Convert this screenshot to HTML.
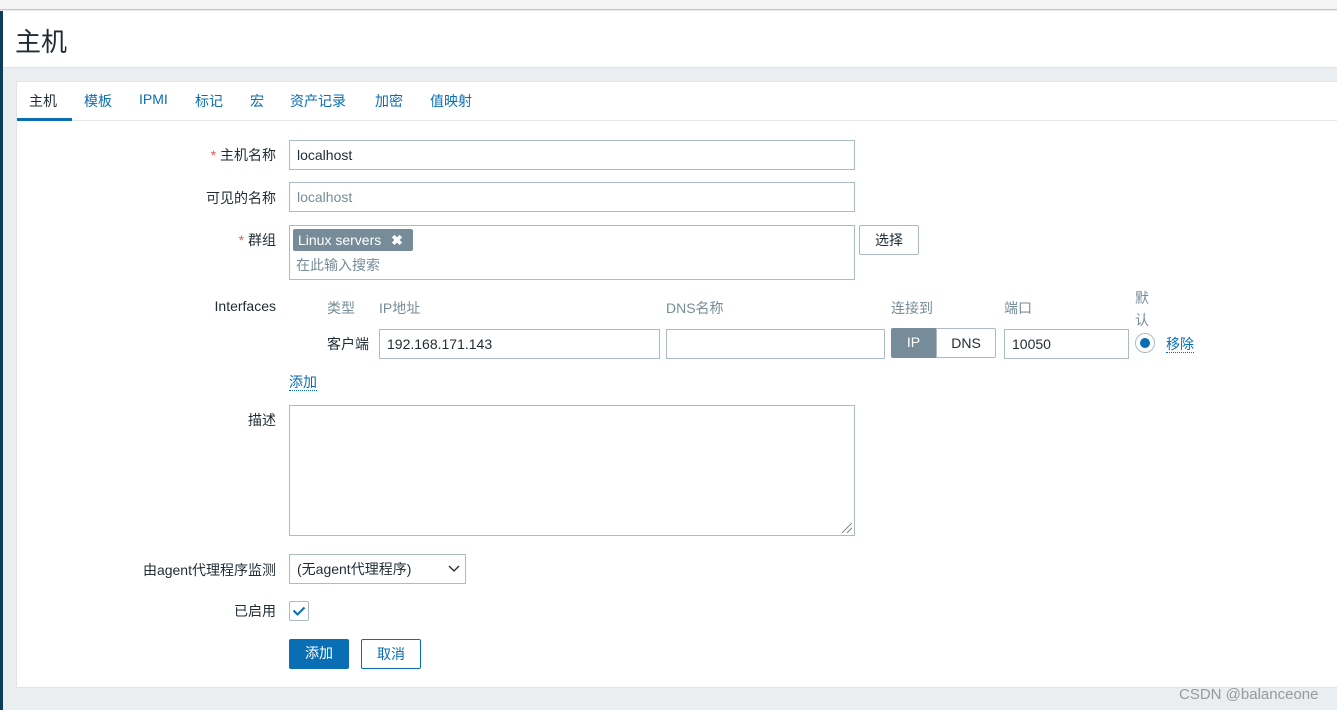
<!DOCTYPE html>
<html><head><meta charset="utf-8"><style>
*{box-sizing:border-box;margin:0;padding:0}
body{width:1337px;height:710px;overflow:hidden;background:#ebeef0;font-family:"Liberation Sans","Noto Sans CJK SC",sans-serif;font-size:14px;color:#1f2c33;position:relative}
.abs{position:absolute}
.top{left:0;top:0;width:1337px;height:10px;background:#f5f5f5;border-bottom:1px solid #c4c4c4}
.lbar{left:0;top:11px;width:3px;height:699px;background:#0e3c5c}
.hdr{left:3px;top:11px;width:1334px;height:57px;background:#fff;border-bottom:1px solid #dfe4e7}
.hdr h1{font-weight:normal;font-size:26px;position:absolute;left:12px;top:11px;color:#1f2c33}
.card{left:16px;top:81px;width:1321px;height:607px;background:#fff;border:1px solid #dfe4e7;border-right:none}
.tabs{left:17px;top:82px;width:1320px;height:39px;border-bottom:1px solid #e6e6e6}
.tab{position:absolute;top:9px;font-size:14px;color:#0a6eb4}
.lbl{position:absolute;text-align:right;right:1061px;font-size:14px;color:#1f2c33;white-space:nowrap}
.inp{position:absolute;border:1px solid #acbbc2;background:#fff;height:30px;padding:0 7px;line-height:28px;font-size:14px}
.gray{color:#768d99}
.req{color:#e45959}
.btn{position:absolute;height:30px;line-height:28px;text-align:center;font-size:14px;border-radius:2px}
.link{color:#0a6eb4;border-bottom:1px dotted #0a6eb4}
</style></head><body>
<div class="abs top"></div>
<div class="abs hdr"><h1>主机</h1></div>
<div class="abs lbar"></div>
<div class="abs card"></div>
<div class="abs tabs">
<span class="tab" style="left:12px;color:#1f2c33">主机</span>
<div class="abs" style="left:0;top:36px;width:55px;height:3px;background:#0a6eb4"></div>
<span class="tab" style="left:67px">模板</span>
<span class="tab" style="left:122px">IPMI</span>
<span class="tab" style="left:178px">标记</span>
<span class="tab" style="left:233px">宏</span>
<span class="tab" style="left:273px">资产记录</span>
<span class="tab" style="left:358px">加密</span>
<span class="tab" style="left:413px">值映射</span>
</div>

<div class="lbl" style="top:145px"><span class="req">* </span>主机名称</div>
<div class="inp" style="left:289px;top:140px;width:566px">localhost</div>
<div class="lbl" style="top:188px">可见的名称</div>
<div class="inp gray" style="left:289px;top:182px;width:566px">localhost</div>
<div class="lbl" style="top:230px"><span class="req">* </span>群组</div>
<div class="inp" style="left:289px;top:225px;width:566px;height:55px"></div>
<div class="abs" style="left:293px;top:229px;width:120px;height:22px;background:#768d99;color:#fff;border-radius:2px;padding:0 5px;line-height:22px">Linux servers <b style="margin-left:6px">✖</b></div>
<div class="abs gray" style="left:296px;top:255px">在此输入搜索</div>
<div class="btn" style="left:859px;top:225px;width:60px;border:1px solid #acbbc2;background:#fff">选择</div>

<div class="lbl" style="top:298px">Interfaces</div>
<div class="abs gray" style="left:327px;top:298px">类型</div>
<div class="abs gray" style="left:379px;top:298px">IP地址</div>
<div class="abs gray" style="left:666px;top:298px">DNS名称</div>
<div class="abs gray" style="left:891px;top:298px">连接到</div>
<div class="abs gray" style="left:1004px;top:298px">端口</div>
<div class="abs gray" style="left:1135px;top:287px;line-height:22px;width:16px">默认</div>
<div class="abs" style="left:327px;top:334px">客户端</div>
<div class="inp" style="left:379px;top:329px;width:281px">192.168.171.143</div>
<div class="inp" style="left:666px;top:329px;width:219px"></div>
<div class="btn" style="left:891px;top:328px;width:45px;background:#768d99;color:#fff;border-radius:2px 0 0 2px">IP</div>
<div class="btn" style="left:936px;top:328px;width:60px;border:1px solid #acbbc2;border-radius:0 2px 2px 0">DNS</div>
<div class="inp" style="left:1004px;top:329px;width:125px">10050</div>
<div class="abs" style="left:1135px;top:333px;width:20px;height:20px;border:1px solid #acbbc2;border-radius:50%"><div class="abs" style="left:4px;top:4px;width:10px;height:10px;border-radius:50%;background:#0a6eb4"></div></div>
<div class="abs" style="left:1166px;top:334px"><span class="link">移除</span></div>
<div class="abs" style="left:289px;top:372px"><span class="link">添加</span></div>

<div class="lbl" style="top:410px">描述</div>
<div class="inp" style="left:289px;top:405px;width:566px;height:131px"></div>
<div class="abs" style="left:842px;top:523px;width:10px;height:10px;background:linear-gradient(135deg,transparent 45%,#777 46%,#777 52%,transparent 53%,transparent 70%,#777 71%,#777 77%,transparent 78%)"></div>

<div class="lbl" style="top:560px">由agent代理程序监测</div>
<div class="inp" style="left:289px;top:554px;width:177px">(无agent代理程序)</div>
<svg class="abs" style="left:448px;top:565px" width="12" height="8"><path d="M1 1l5 5 5-5" fill="none" stroke="#1f2c33" stroke-width="1.3"/></svg>
<div class="lbl" style="top:601px">已启用</div>
<div class="abs" style="left:289px;top:601px;width:20px;height:20px;border:1px solid #acbbc2;border-radius:2px"></div>
<svg class="abs" style="left:292px;top:606px" width="14" height="10"><path d="M1.5 4.5l4 4 7-7" fill="none" stroke="#0a6eb4" stroke-width="2"/></svg>
<div class="btn" style="left:289px;top:639px;width:60px;background:#0a6eb4;color:#fff">添加</div>
<div class="btn" style="left:361px;top:639px;width:60px;border:1px solid #0a6eb4;color:#0a6eb4;background:#fff">取消</div>
<div class="abs" style="left:1179px;top:686px;color:#999;font-size:15px">CSDN @balanceone</div>
</body></html>
